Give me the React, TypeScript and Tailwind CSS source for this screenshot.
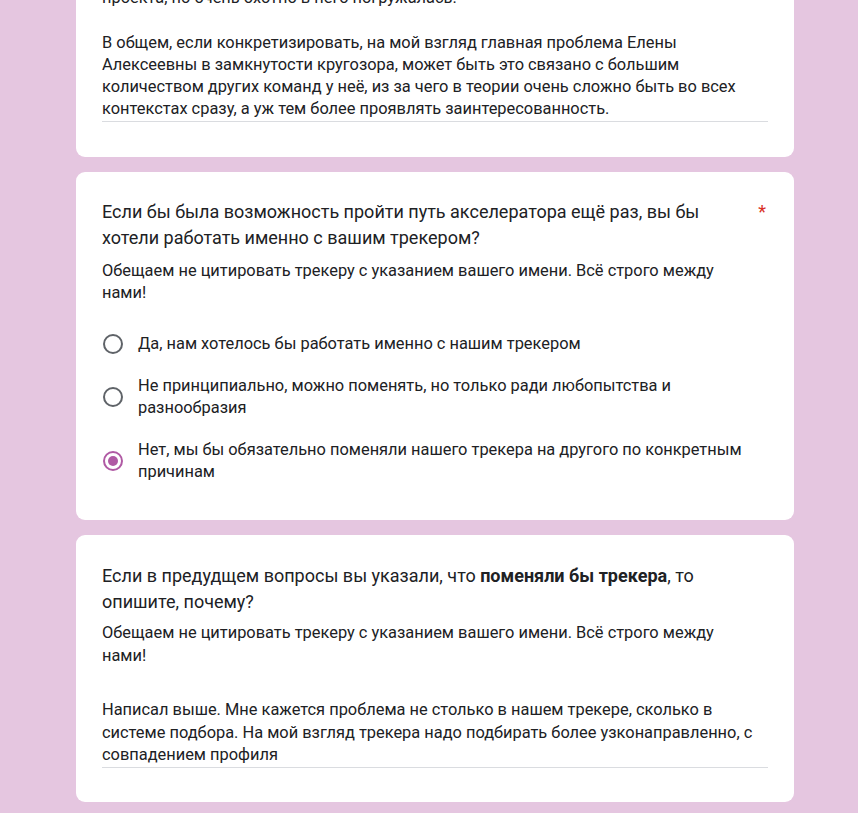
const options = [
  { label: "Да, нам хотелось бы работать именно с нашим трекером", checked: false },
  {
    label: "Не принципиально, можно поменять, но только ради любопытства и разнообразия",
    checked: false,
  },
  {
    label: "Нет, мы бы обязательно поменяли нашего трекера на другого по конкретным причинам",
    checked: true,
  },
];

function Radio({ checked }: { checked: boolean }) {
  return (
    <span
      className={
        checked
          ? "flex h-[20px] w-[20px] shrink-0 items-center justify-center rounded-full border-2 border-[#b05aa4]"
          : "flex h-[20px] w-[20px] shrink-0 items-center justify-center rounded-full border-2 border-[#5f6368]"
      }
    >
      {checked && <span className="h-[10px] w-[10px] rounded-full bg-[#b05aa4]" />}
    </span>
  );
}

export default function App() {
  return (
    <div
      className="h-[813px] overflow-hidden bg-[#e5c6e0] pl-[76px] text-[#202124]"
      style={{ fontFamily: "Roboto, 'Noto Sans', Arial, sans-serif" }}
    >
      <div className="flex w-[718px] flex-col gap-[15px]">
        {/* previous answer, cut at the top */}
        <div className="-mt-[40px] rounded-[9px] bg-white px-[26px] pb-[35px] pt-[27px]">
          <div className="border-b border-[#dadce0] text-[16.4px] leading-[22.3px] whitespace-pre-line">
            {"проекта, но очень охотно в него погружалась.\n\nВ общем, если конкретизировать, на мой взгляд главная проблема Елены Алексеевны в замкнутости кругозора, может быть это связано с большим количеством других команд у неё, из за чего в теории очень сложно быть во всех контекстах сразу, а уж тем более проявлять заинтересованность."}
          </div>
        </div>

        <div className="rounded-[9px] bg-white px-[26px] pb-[37px] pt-[27px]">
          <div className="flex">
            <h2 className="flex-1 pr-[20px] text-[18px] leading-[26.4px]">
              Если бы была возможность пройти путь акселератора ещё раз, вы бы хотели работать именно с
              вашим трекером?
            </h2>
            <span className="pr-[2px] text-[18px] leading-[26.4px] text-[#d93025]">*</span>
          </div>
          <p className="mt-[8px] pr-[20px] text-[16.4px] leading-[22px]">
            Обещаем не цитировать трекеру с указанием вашего имени. Всё строго между нами!
          </p>
          <div className="mt-[29px] flex flex-col gap-[20px]">
            {options.map((o) => (
              <label key={o.label} className="flex items-center gap-[15px] pl-[1px]">
                <Radio checked={o.checked} />
                <span className="text-[16.4px] leading-[22px]">{o.label}</span>
              </label>
            ))}
          </div>
        </div>

        <div className="rounded-[9px] bg-white px-[26px] pb-[34px] pt-[28px]">
          <h2 className="pr-[40px] text-[18px] leading-[26.4px]">
            Если в предудщем вопросы вы указали, что <b className="font-bold">поменяли бы трекера</b>,
            то опишите, почему?
          </h2>
          <p className="mt-[7px] pr-[20px] text-[16.4px] leading-[22.5px]">
            Обещаем не цитировать трекеру с указанием вашего имени. Всё строго между нами!
          </p>
          <div className="mt-[32px] border-b border-[#dadce0] text-[16.4px] leading-[22.4px]">
            Написал выше. Мне кажется проблема не столько в нашем трекере, сколько в системе подбора. На
            мой взгляд трекера надо подбирать более узконаправленно, с совпадением профиля
          </div>
        </div>
      </div>
    </div>
  );
}
